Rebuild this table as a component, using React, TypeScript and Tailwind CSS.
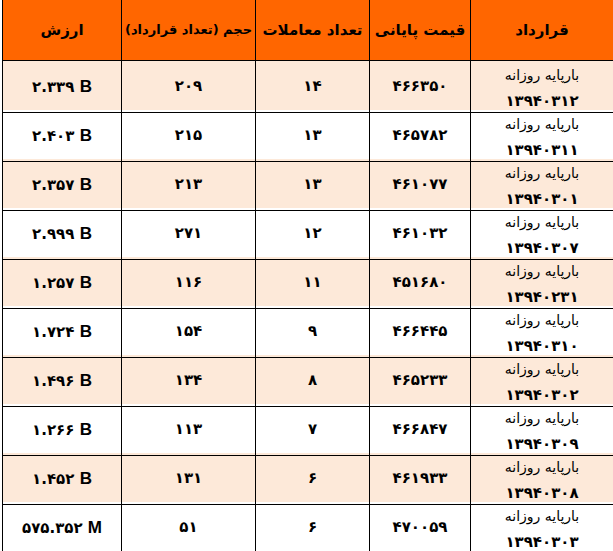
const rows = [
  ["۱۳۹۴۰۳۱۲", "۴۶۶۳۵۰", "۱۴", "۲۰۹", "۲.۳۳۹", "B"],
  ["۱۳۹۴۰۳۱۱", "۴۶۵۷۸۲", "۱۳", "۲۱۵", "۲.۴۰۳", "B"],
  ["۱۳۹۴۰۳۰۱", "۴۶۱۰۷۷", "۱۳", "۲۱۳", "۲.۳۵۷", "B"],
  ["۱۳۹۴۰۳۰۷", "۴۶۱۰۳۲", "۱۲", "۲۷۱", "۲.۹۹۹", "B"],
  ["۱۳۹۴۰۲۳۱", "۴۵۱۶۸۰", "۱۱", "۱۱۶", "۱.۲۵۷", "B"],
  ["۱۳۹۴۰۳۱۰", "۴۶۶۴۴۵", "۹", "۱۵۴", "۱.۷۲۴", "B"],
  ["۱۳۹۴۰۳۰۲", "۴۶۵۲۳۳", "۸", "۱۳۴", "۱.۴۹۶", "B"],
  ["۱۳۹۴۰۳۰۹", "۴۶۶۸۴۷", "۷", "۱۱۳", "۱.۲۶۶", "B"],
  ["۱۳۹۴۰۳۰۸", "۴۶۱۹۳۳", "۶", "۱۳۱", "۱.۴۵۲", "B"],
  ["۱۳۹۴۰۳۰۳", "۴۷۰۰۵۹", "۶", "۵۱", "۵۷۵.۳۵۲", "M"],
];

const headers = ["قرارداد", "قیمت پایانی", "تعداد معاملات", "حجم (تعداد قرارداد)", "ارزش"];

const grid = "grid grid-cols-[143px_101px_114px_134px_119px]";
const cell = "border-l border-b border-black flex items-center justify-center whitespace-nowrap";

export default function App() {
  return (
    <div className="w-[613px] h-[551px] bg-white overflow-hidden font-['DejaVu_Sans',sans-serif] text-black">
      <div dir="rtl" className="ml-[2px] w-[611px]">
        <div className={`${grid} h-[61px] bg-[#ff6600]`}>
          {headers.map((h, i) => (
            <div key={h} className={`${cell} font-bold ${i === 3 ? "text-[13px]" : "text-[15px]"}`}>
              {h}
            </div>
          ))}
        </div>
        {rows.map((r, i) => (
          <div key={i} className={`${grid} h-[49px] ${i % 2 === 0 ? "bg-[#fde9d9]" : "bg-white"}`}>
            <div className="border-l border-b border-black flex flex-col items-center pt-[3px] text-[14px] leading-[22px]">
              <span>بارپایه روزانه</span>
              <span className="font-bold mt-[4px] text-[15px]">{r[0]}</span>
            </div>
            <div className={`${cell} text-[15px] font-bold`}>{r[1]}</div>
            <div className={`${cell} text-[15px] font-bold`}>{r[2]}</div>
            <div className={`${cell} text-[15px] font-bold`}>{r[3]}</div>
            <div className={`${cell} text-[15px] font-bold`}>
              <span dir="ltr">
                {r[4]} <span className="font-['Liberation_Sans',sans-serif] text-[17px]">{r[5]}</span>
              </span>
            </div>
          </div>
        ))}
      </div>
    </div>
  );
}
